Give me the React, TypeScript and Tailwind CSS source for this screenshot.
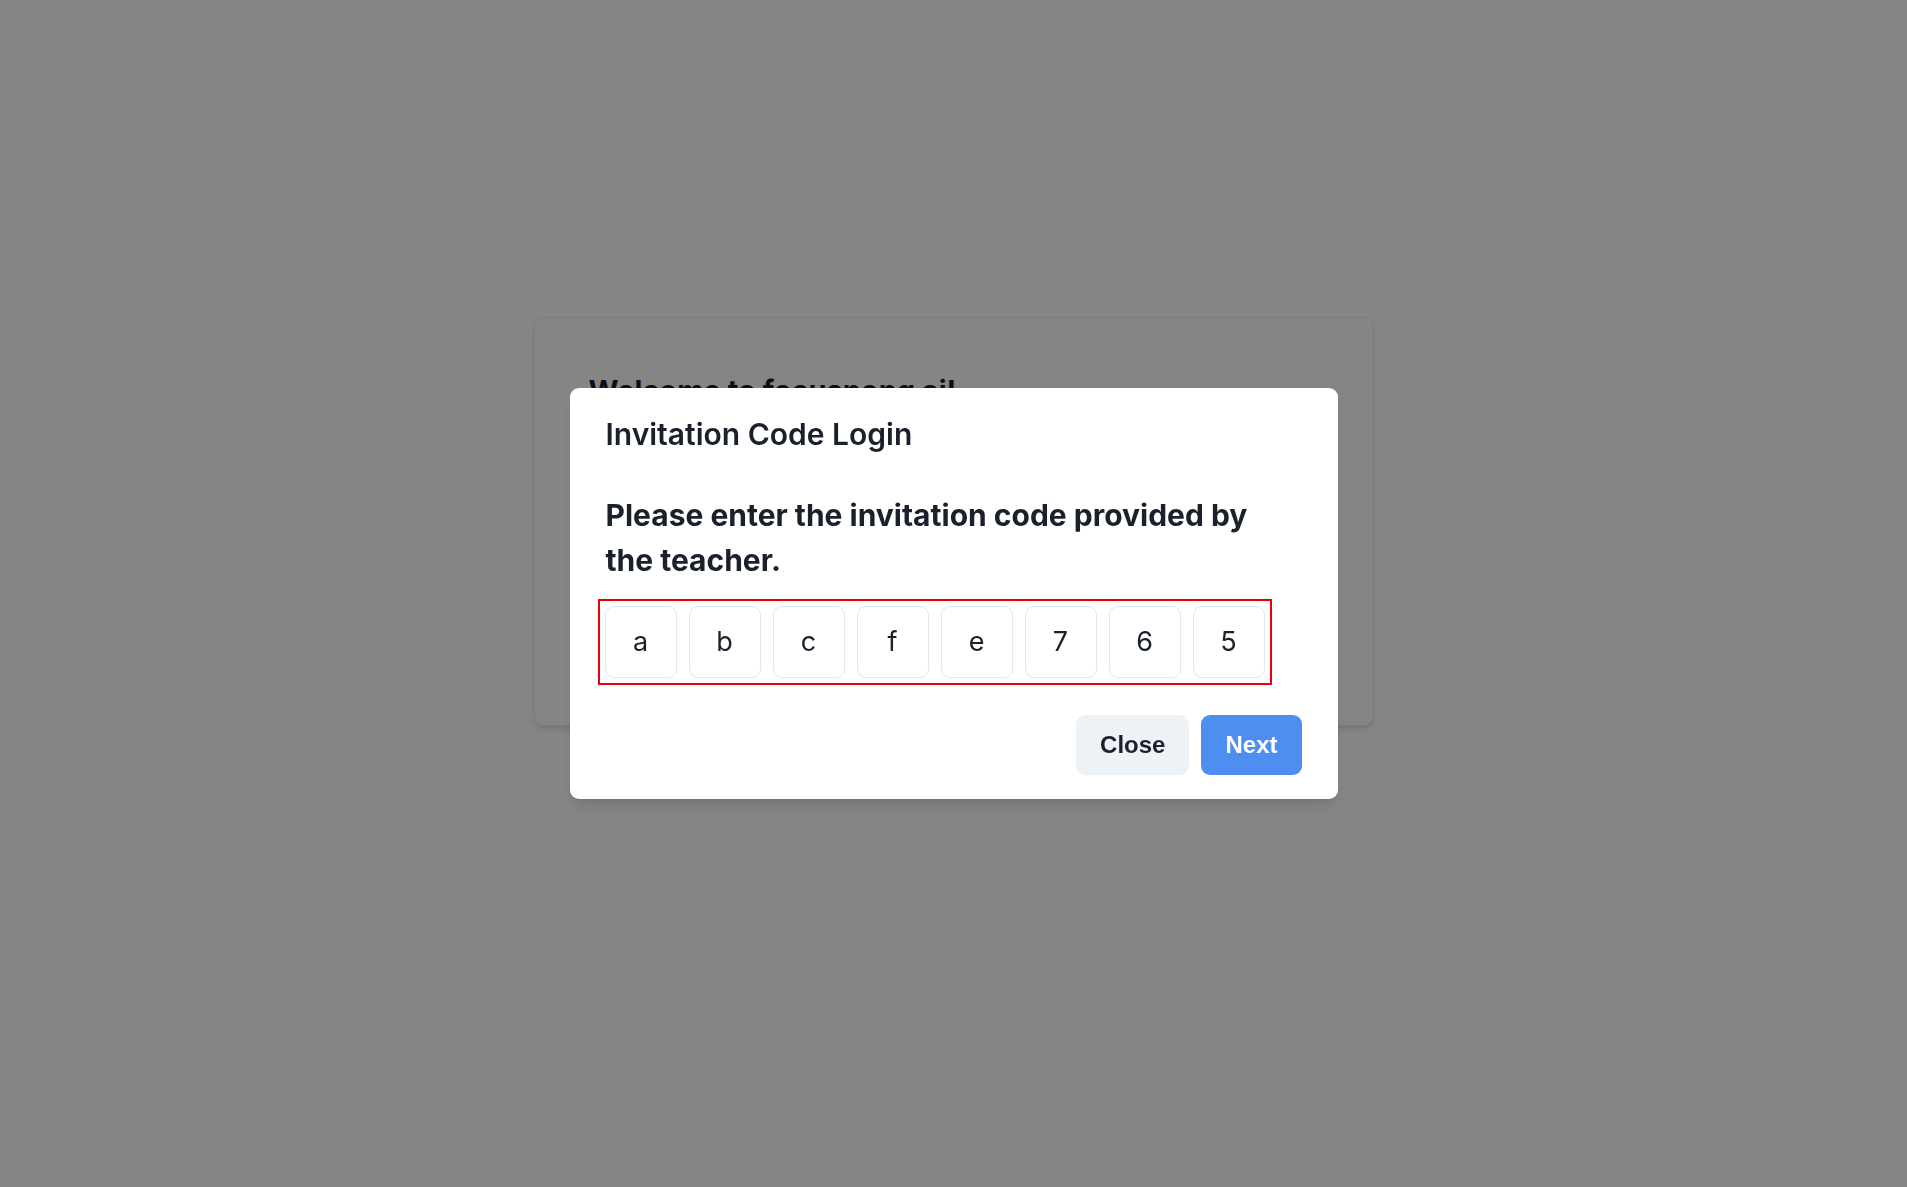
const code = ["a", "b", "c", "f", "e", "7", "6", "5"];

export default function App() {
  return (
    <div className="relative min-h-screen bg-white font-['Inter',sans-serif] text-[#1a202c]">
      {/* page behind the dialog */}
      <div className="flex justify-center pt-[317px]">
        <div className="h-[409px] w-[840px] rounded-[10px] border border-[#edf0f4] bg-white px-[54px] pt-[50px] shadow-md">
          <h1 className="text-[29px] font-bold leading-[45px]">Welcome to focusnong ai!</h1>
        </div>
      </div>

      <div className="fixed inset-0 bg-[rgba(0,0,0,0.48)]" />

      <div className="fixed inset-0 flex items-center justify-center">
        <div className="w-[768px] rounded-[9px] bg-white shadow-lg">
          <header className="px-9 py-6 text-[30px] font-semibold leading-[45px]">Invitation Code Login</header>
          <div className="px-9 pt-3">
            <p className="max-w-[660px] text-[30px] font-bold leading-[45px]">
              Please enter the invitation code provided by the teacher.
            </p>
            <div className="-ml-2 mt-[16px] inline-flex gap-3 border-2 border-[#e8000b] p-[5px]">
              {code.map((c, i) => (
                <div
                  key={i}
                  className="flex h-[72px] w-[72px] items-center justify-center rounded-[9px] border border-[#e2e8f0] text-[27px]"
                >
                  {c}
                </div>
              ))}
            </div>
          </div>
          <footer className="flex justify-end gap-3 px-9 pb-6 pt-[30px] font-['Liberation_Sans',Arial,sans-serif]">
            <button className="h-[60px] rounded-[9px] bg-[#edf2f7] px-6 text-[24px] font-bold text-[#1a202c]">
              Close
            </button>
            <button className="h-[60px] rounded-[9px] bg-[#4e8ef1] px-6 text-[24px] font-bold text-white">
              Next
            </button>
          </footer>
        </div>
      </div>
    </div>
  );
}
